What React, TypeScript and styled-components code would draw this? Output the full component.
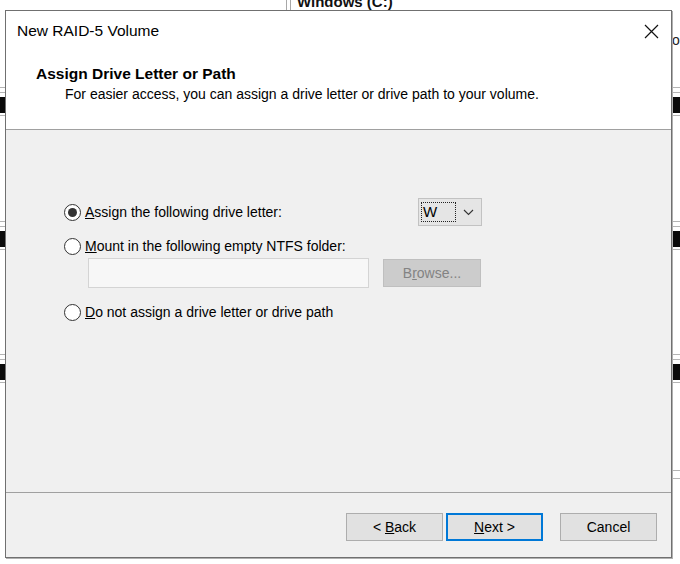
import styled, { createGlobalStyle } from 'styled-components'

const GlobalStyle = createGlobalStyle`
  html, body {
    margin: 0;
    padding: 0;
    background: #fff;
  }
  body {
    font-family: 'Liberation Sans', Arial, sans-serif;
    color: #000;
  }
`

const Desktop = styled.div`
  position: relative;
  width: 680px;
  height: 564px;
  overflow: hidden;
  background: #fff;
`

/* things of the window behind the dialog */
const BehindLabel = styled.div`
  position: absolute;
  left: 297px;
  top: -7px;
  font-size: 15px;
  font-weight: 700;
  color: #111;
  white-space: nowrap;
`

const BehindSplit = styled.div`
  position: absolute;
  left: 286px;
  top: 0;
  width: 3px;
  height: 12px;
  border-left: 1px solid #a8a8a8;
  border-right: 1px solid #a8a8a8;
`

const BehindLetter = styled.div`
  position: absolute;
  left: 672px;
  top: 32px;
  font-size: 14px;
  color: #222;
`

const EdgeGroup = styled.div<{ $side: 'left' | 'right'; $top: number }>`
  position: absolute;
  ${p => (p.$side === 'left' ? 'left: 0; width: 5px;' : 'right: 0; width: 9px;')}
  top: ${p => p.$top}px;
  display: flex;
  flex-direction: column;
`

const EdgeLine = styled.div<{ $gap?: number }>`
  height: 1px;
  background: #b4b4b4;
  margin-top: ${p => p.$gap ?? 0}px;
`

const EdgeBlock = styled.div`
  height: 16px;
  margin-top: 4px;
  background: #0a0a0a;
`

const Edge = ({ side, top }: { side: 'left' | 'right'; top: number }) => (
  <EdgeGroup $side={side} $top={top}>
    <EdgeLine />
    <EdgeLine $gap={4} />
    <EdgeBlock />
    <EdgeLine $gap={2} />
  </EdgeGroup>
)

const EdgeRule = styled.div<{ $side: 'left' | 'right'; $top: number }>`
  position: absolute;
  ${p => (p.$side === 'left' ? 'left: 0; width: 5px;' : 'right: 0; width: 9px;')}
  top: ${p => p.$top}px;
  height: 1px;
  background: #b4b4b4;
`

/* dialog */
const Dialog = styled.div`
  position: absolute;
  left: 5px;
  top: 10px;
  width: 667px;
  height: 548px;
  box-sizing: border-box;
  border: 1px solid #707070;
  box-shadow: 1px 1px 0 #b0b0b0;
  display: flex;
  flex-direction: column;
  background: #f0f0f0;
`

const TitleBar = styled.div`
  height: 40px;
  flex: none;
  background: #fff;
  display: flex;
  align-items: center;
  justify-content: space-between;
  padding: 0 12px 0 11px;
`

const TitleText = styled.div`
  font-size: 15.5px;
  color: #000;
`

const CloseButton = styled.div`
  width: 16px;
  height: 16px;
  display: flex;
  align-items: center;
  justify-content: center;
`

const Header = styled.div`
  height: 79px;
  flex: none;
  box-sizing: border-box;
  background: #fff;
  border-bottom: 1px solid #a0a0a0;
  padding: 14px 0 0 30px;
`

const HeaderTitle = styled.div`
  font-size: 15.5px;
  line-height: 18px;
  font-weight: 700;
`

const HeaderSub = styled.div`
  font-size: 14px;
  line-height: 17px;
  margin: 3px 0 0 29px;
`

const Body = styled.div`
  height: 362px;
  flex: none;
  padding: 68px 0 0 58px;
  box-sizing: border-box;
  display: flex;
  flex-direction: column;
`

const OptionRow = styled.div<{ $gap?: number; $wide?: boolean }>`
  display: flex;
  align-items: center;
  justify-content: space-between;
  height: ${p => (p.$wide ? 28 : 20)}px;
  width: ${p => (p.$wide ? '418px' : 'auto')};
  margin-top: ${p => p.$gap ?? 0}px;
`

const RadioLabel = styled.label`
  display: flex;
  align-items: center;
  gap: 4px;
  font-size: 14px;
`

const RadioCircle = styled.span<{ $checked?: boolean }>`
  width: 17px;
  height: 17px;
  box-sizing: border-box;
  border: 1px solid #333;
  border-radius: 50%;
  background: #fff;
  display: flex;
  align-items: center;
  justify-content: center;

  &::after {
    content: '';
    width: 9px;
    height: 9px;
    border-radius: 50%;
    background: #333;
    display: ${p => (p.$checked ? 'block' : 'none')};
  }
`

const Dropdown = styled.div`
  width: 64px;
  height: 28px;
  box-sizing: border-box;
  border: 1px solid #c2c2c2;
  background: #e5e5e5;
  display: flex;
  align-items: center;
  padding: 0 0 0 2px;
`

const FocusBox = styled.div`
  width: 35px;
  height: 20px;
  box-sizing: border-box;
  border: 1px dotted #222;
  font-size: 15px;
  line-height: 18px;
  padding-left: 1px;
`

const Chevron = styled.div`
  flex: 1;
  display: flex;
  justify-content: center;
`

const FolderRow = styled.div`
  display: flex;
  gap: 14px;
  align-items: center;
  margin: 2px 0 0 24px;
  height: 30px;
`

const PathField = styled.div`
  width: 281px;
  height: 30px;
  box-sizing: border-box;
  border: 1px solid #d4d4d4;
  background: #f7f7f7;
`

const DisabledButton = styled.div`
  width: 98px;
  height: 28px;
  box-sizing: border-box;
  border: 1px solid #bfbfbf;
  background: #cccccc;
  color: #838383;
  font-size: 14px;
  display: flex;
  align-items: center;
  justify-content: center;
`

const Footer = styled.div`
  flex: 1;
  border-top: 1px solid #a0a0a0;
  display: flex;
  justify-content: flex-end;
  align-items: flex-start;
  padding: 20px 14px 0 0;
`

const Button = styled.div<{ $primary?: boolean; $gap?: number }>`
  width: 97px;
  height: 28px;
  box-sizing: border-box;
  margin-left: ${p => p.$gap ?? 0}px;
  border: ${p => (p.$primary ? '2px solid #0078d7' : '1px solid #adadad')};
  background: #e1e1e1;
  font-size: 14px;
  display: flex;
  align-items: center;
  justify-content: center;
`

export default function App() {
  return (
    <>
      <GlobalStyle />
      <Desktop>
        <BehindSplit />
        <BehindLabel>Windows (C:)</BehindLabel>
        <BehindLetter>o</BehindLetter>
        <Edge side="left" top={87} />
        <Edge side="left" top={221} />
        <Edge side="left" top={354} />
        <EdgeRule side="left" $top={470} />
        <EdgeRule side="left" $top={478} />
        <Edge side="right" top={87} />
        <Edge side="right" top={221} />
        <Edge side="right" top={354} />
        <EdgeRule side="right" $top={470} />
        <EdgeRule side="right" $top={478} />

        <Dialog>
          <TitleBar>
            <TitleText>New RAID-5 Volume</TitleText>
            <CloseButton>
              <svg width="15" height="15" viewBox="0 0 15 15">
                <path d="M1 1L14 14M14 1L1 14" stroke="#111" strokeWidth="1.2" fill="none" />
              </svg>
            </CloseButton>
          </TitleBar>
          <Header>
            <HeaderTitle>Assign Drive Letter or Path</HeaderTitle>
            <HeaderSub>For easier access, you can assign a drive letter or drive path to your volume.</HeaderSub>
          </Header>
          <Body>
            <OptionRow $wide>
              <RadioLabel>
                <RadioCircle $checked />
                <span><u>A</u>ssign the following drive letter:</span>
              </RadioLabel>
              <Dropdown>
                <FocusBox>W</FocusBox>
                <Chevron>
                  <svg width="11" height="7" viewBox="0 0 11 7">
                    <path d="M1 1L5.5 5.5L10 1" stroke="#333" strokeWidth="1.1" fill="none" />
                  </svg>
                </Chevron>
              </Dropdown>
            </OptionRow>
            <OptionRow $gap={10}>
              <RadioLabel>
                <RadioCircle />
                <span><u>M</u>ount in the following empty NTFS folder:</span>
              </RadioLabel>
            </OptionRow>
            <FolderRow>
              <PathField />
              <DisabledButton><span>B<u>r</u>owse...</span></DisabledButton>
            </FolderRow>
            <OptionRow $gap={14}>
              <RadioLabel>
                <RadioCircle />
                <span><u>D</u>o not assign a drive letter or drive path</span>
              </RadioLabel>
            </OptionRow>
          </Body>
          <Footer>
            <Button><span>&lt; <u>B</u>ack</span></Button>
            <Button $primary $gap={3}><span><u>N</u>ext &gt;</span></Button>
            <Button $gap={17}>Cancel</Button>
          </Footer>
        </Dialog>
      </Desktop>
    </>
  )
}
